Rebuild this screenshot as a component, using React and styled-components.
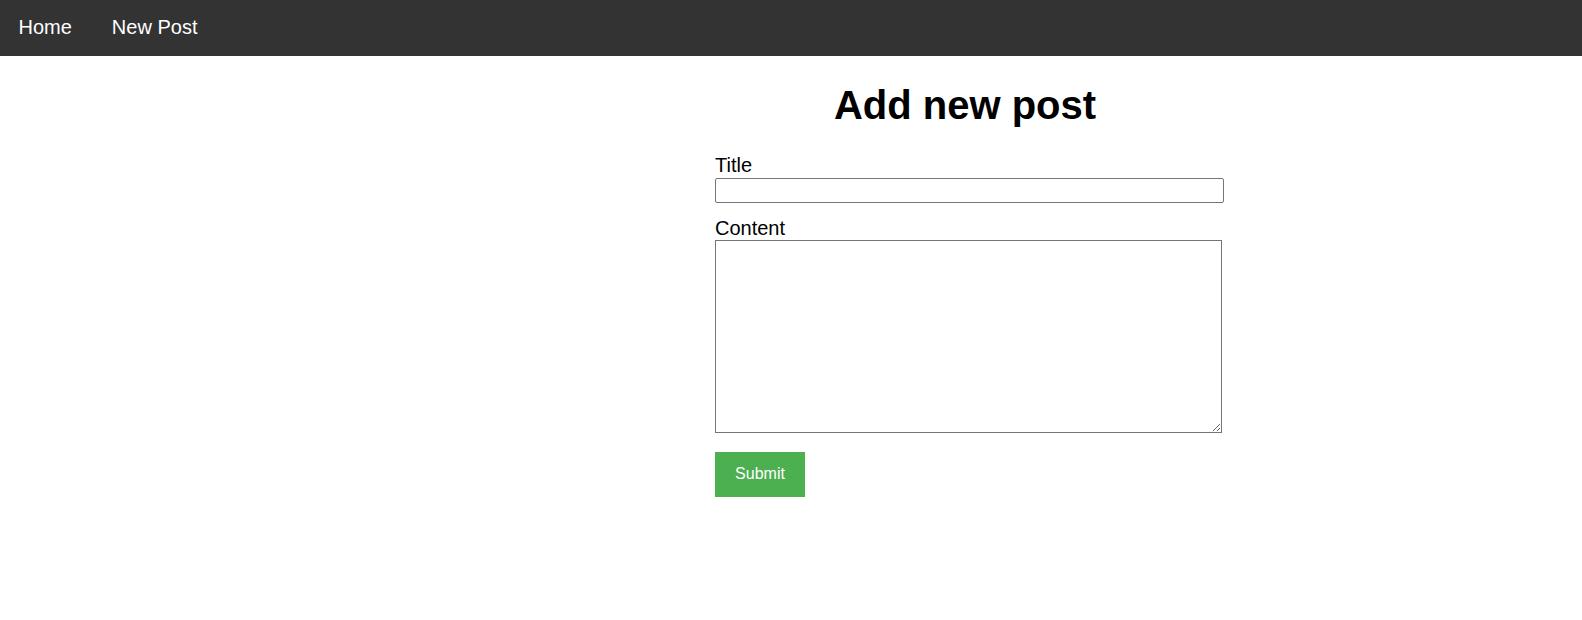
import React from "react";
import styled, { createGlobalStyle } from "styled-components";

const GlobalStyle = createGlobalStyle`
  body {
    margin: 0;
    font-family: "Liberation Sans", Arial, sans-serif;
    background: #fff;
    color: #000;
  }
`;

const Nav = styled.nav`
  height: 56px;
  background: #333;
  display: flex;
  align-items: center;
  gap: 40px;
  padding: 0 18.5px 2px;
  box-sizing: border-box;
`;

const NavLink = styled.a`
  color: #fff;
  font-size: 20px;
  text-decoration: none;
  cursor: pointer;
`;

const Main = styled.main`
  display: flex;
  justify-content: center;
  padding-left: 348px;
`;

const Container = styled.div`
  width: 500px;
  display: flex;
  flex-direction: column;
`;

const Heading = styled.h1`
  margin: 26px 0 26px;
  font-size: 40px;
  line-height: 46px;
  font-weight: bold;
  text-align: center;
`;

const Label = styled.label`
  display: block;
  font-size: 20px;
  line-height: 23px;
`;

const TextInput = styled.input`
  box-sizing: border-box;
  width: 509px;
  height: 25px;
  margin: 1px 0 14px;
  padding: 1px 2px;
  border: 1px solid #767676;
  border-radius: 2px;
  font-size: 16px;
  font-family: inherit;
`;

const TextArea = styled.textarea`
  box-sizing: border-box;
  width: 507px;
  height: 193px;
  margin: 0 0 19px;
  padding: 2px;
  border: 1px solid #767676;
  border-radius: 0;
  font-size: 16px;
  font-family: inherit;
`;

const SubmitButton = styled.button`
  align-self: flex-start;
  width: 90px;
  height: 45px;
  padding: 0 0 1px;
  background: #4caf50;
  color: #fff;
  border: none;
  font-size: 16px;
  font-family: inherit;
  cursor: pointer;
`;

const App = () => {
  return (
    <>
      <GlobalStyle />
      <Nav>
        <NavLink>Home</NavLink>
        <NavLink>New Post</NavLink>
      </Nav>
      <Main>
        <Container>
          <Heading>Add new post</Heading>
          <Label htmlFor="title">Title</Label>
          <TextInput id="title" type="text" />
          <Label htmlFor="content">Content</Label>
          <TextArea id="content" />
          <SubmitButton type="submit">Submit</SubmitButton>
        </Container>
      </Main>
    </>
  );
};

export default App;
